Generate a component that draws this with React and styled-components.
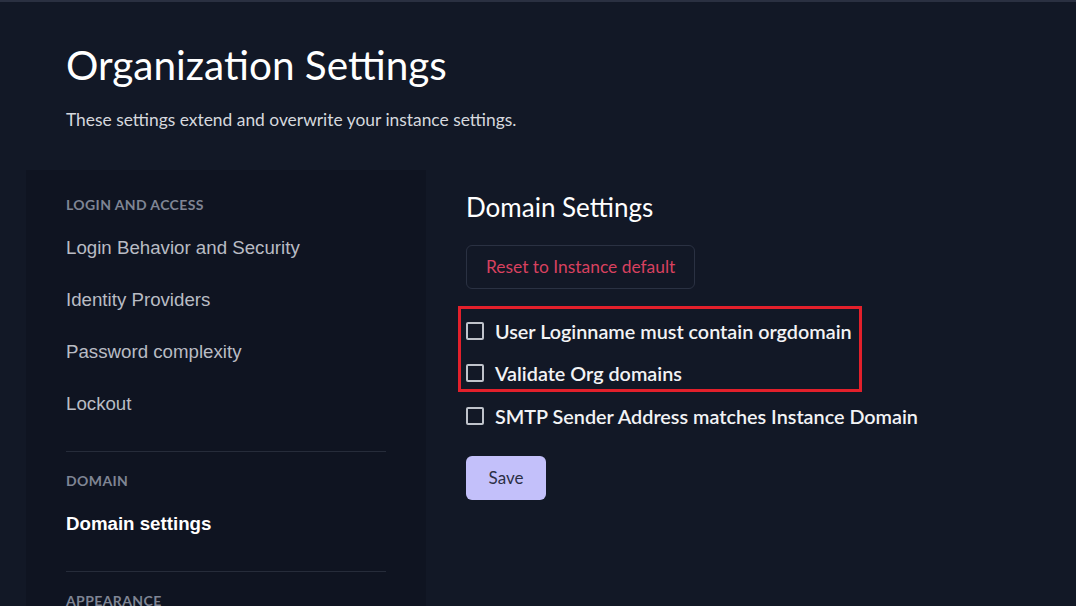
import React, {useState} from 'react';
import styled, {createGlobalStyle} from 'styled-components';

const GlobalStyle = createGlobalStyle`
  html, body {
    margin: 0;
    padding: 0;
    background: #121826;
  }
  body {
    font-family: Lato, "Noto Sans", sans-serif;
    color: #ffffff;
  }
  * {
    box-sizing: border-box;
  }
`;

const Page = styled.div`
  height: 606px;
  border-top: 2px solid #2a3041;
  background: #121826;
  overflow: hidden;
`;

const Header = styled.header`
  padding: 39px 0 0 66px;
`;

const Title = styled.h1`
  margin: 0;
  font-family: Lato, sans-serif;
  font-weight: 400;
  font-size: 40.5px;
  line-height: 1.2;
  color: #ffffff;
`;

const Subtitle = styled.p`
  margin: 20px 0 0;
  font-family: Lato, sans-serif;
  font-size: 17.4px;
  line-height: 1.2;
  color: #d6d8de;
`;

const Layout = styled.div`
  display: flex;
  gap: 40px;
  margin-top: 40px;
  padding-left: 26px;
`;

const Sidebar = styled.nav`
  width: 400px;
  flex-shrink: 0;
  padding: 27px 40px 40px;
  background: #0f1421;
  min-height: 440px;
`;

const SectionLabel = styled.div`
  font-family: Lato, sans-serif;
  font-weight: 700;
  font-size: 14px;
  letter-spacing: 0.4px;
  line-height: 16px;
  color: #7f8594;
  text-transform: uppercase;
  margin-bottom: 9px;
`;

const NavItem = styled.a`
  display: block;
  padding: 16px 0;
  font-family: "Liberation Sans", Arial, sans-serif;
  font-size: 18.7px;
  line-height: 20px;
  font-weight: ${p => (p.$active ? 700 : 400)};
  color: ${p => (p.$active ? '#ffffff' : '#b9bcc4')};
  cursor: pointer;
`;

const Divider = styled.hr`
  margin: 21px 0;
  border: none;
  height: 1px;
  background: #262c3a;
`;

const Content = styled.main`
  padding-top: 22px;
  flex: 1;
`;

const Heading = styled.h2`
  margin: 0;
  font-family: Lato, sans-serif;
  font-weight: 400;
  font-size: 26px;
  line-height: 1.2;
  color: #ffffff;
`;

const OutlineButton = styled.button`
  margin-top: 21px;
  height: 44px;
  padding: 0 19px;
  background: transparent;
  border: 1px solid #2a3142;
  border-radius: 6px;
  font-family: Lato, sans-serif;
  font-size: 17.4px;
  color: #d8415f;
  cursor: pointer;
`;

const Options = styled.div`
  margin-top: 31px;
  display: flex;
  flex-direction: column;
  gap: 20.5px;
`;

const Highlighted = styled.div`
  position: relative;
  display: flex;
  flex-direction: column;
  gap: 20.5px;
`;

const Marker = styled.div`
  position: absolute;
  left: -8px;
  top: -14px;
  width: 404px;
  height: 86px;
  border: 3px solid #e3202b;
  pointer-events: none;
`;

const Row = styled.label`
  display: flex;
  align-items: center;
  gap: 11px;
  height: 22px;
  cursor: pointer;
`;

const Box = styled.span`
  width: 18px;
  height: 18px;
  border: 2px solid #bfc3cb;
  border-radius: 2px;
  flex-shrink: 0;
  background: ${p => (p.$checked ? '#c3c0fa' : 'transparent')};
`;

const RowText = styled.span`
  font-family: Lato, sans-serif;
  font-weight: 600;
  font-size: 19.8px;
  line-height: 22px;
  color: #f2f3f5;
  white-space: nowrap;
`;

const SaveButton = styled.button`
  margin-top: 29px;
  width: 80px;
  height: 44px;
  border: none;
  border-radius: 6px;
  background: #c3c0fa;
  font-family: Lato, sans-serif;
  font-size: 17px;
  color: #2b2f45;
  cursor: pointer;
`;

const Checkbox = ({label, checked, onToggle}) => (
    <Row onClick={onToggle}>
        <Box $checked={checked}/>
        <RowText>{label}</RowText>
    </Row>
);

const App = () => {
    const [checks, setChecks] = useState({login: false, validate: false, smtp: false});
    const toggle = (key) => setChecks({...checks, [key]: !checks[key]});

    return (
        <Page>
            <GlobalStyle/>
            <Header>
                <Title>Organization Settings</Title>
                <Subtitle>These settings extend and overwrite your instance settings.</Subtitle>
            </Header>
            <Layout>
                <Sidebar>
                    <SectionLabel>Login and Access</SectionLabel>
                    <NavItem>Login Behavior and Security</NavItem>
                    <NavItem>Identity Providers</NavItem>
                    <NavItem>Password complexity</NavItem>
                    <NavItem>Lockout</NavItem>
                    <Divider/>
                    <SectionLabel>Domain</SectionLabel>
                    <NavItem $active>Domain settings</NavItem>
                    <Divider/>
                    <SectionLabel>Appearance</SectionLabel>
                </Sidebar>
                <Content>
                    <Heading>Domain Settings</Heading>
                    <OutlineButton>Reset to Instance default</OutlineButton>
                    <Options>
                        <Highlighted>
                            <Marker/>
                            <Checkbox label="User Loginname must contain orgdomain" checked={checks.login}
                                      onToggle={() => toggle('login')}/>
                            <Checkbox label="Validate Org domains" checked={checks.validate}
                                      onToggle={() => toggle('validate')}/>
                        </Highlighted>
                        <Checkbox label="SMTP Sender Address matches Instance Domain" checked={checks.smtp}
                                  onToggle={() => toggle('smtp')}/>
                    </Options>
                    <SaveButton>Save</SaveButton>
                </Content>
            </Layout>
        </Page>
    );
};

export default App;
